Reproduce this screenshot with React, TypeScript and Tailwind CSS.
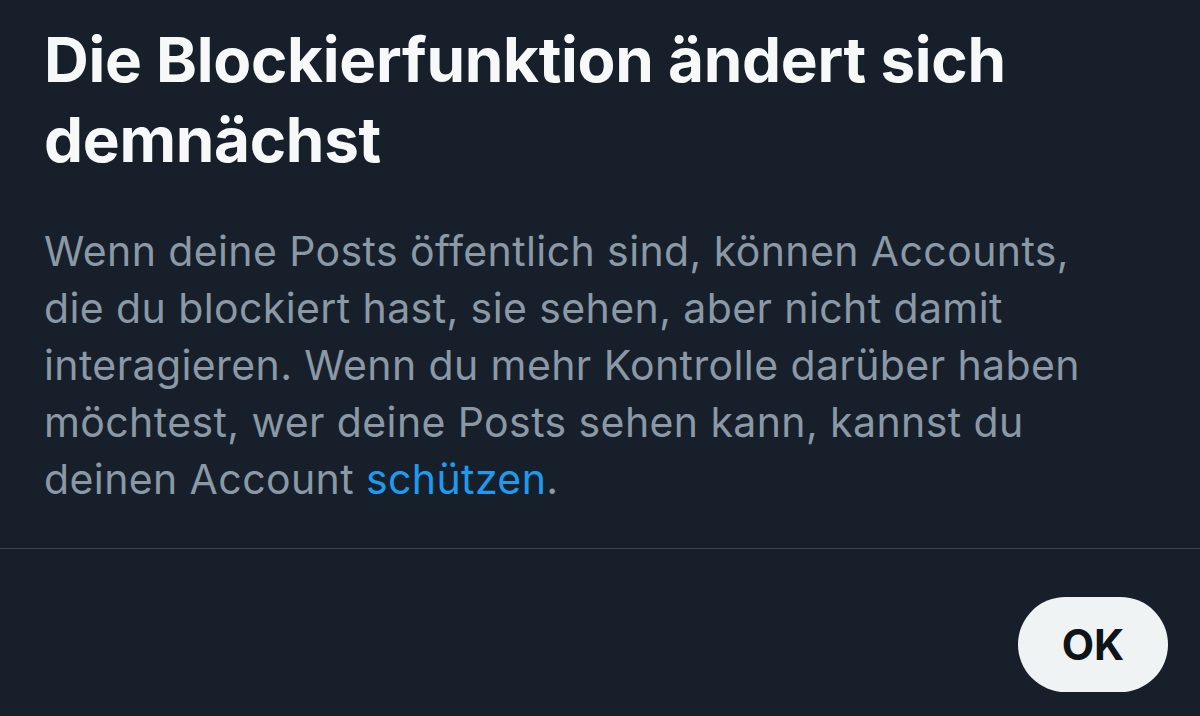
export default function App() {
  return (
    <div className="flex h-[716px] w-[1200px] flex-col bg-[#17202a] font-['Inter',sans-serif]">
      <div className="px-[44px] pt-[20px]">
        <h1 className="text-[62px] font-bold leading-[80px] tracking-[-0.3px] text-[#f7f9f9]">
          Die Blockierfunktion ändert sich
          <br />
          demnächst
        </h1>
        <p className="mt-[43px] text-[41px] leading-[57px] tracking-[0.4px] text-[#8b98a5]">
          Wenn deine Posts öffentlich sind, können Accounts,
          <br />
          die du blockiert hast, sie sehen, aber nicht damit
          <br />
          interagieren. Wenn du mehr Kontrolle darüber haben
          <br />
          möchtest, wer deine Posts sehen kann, kannst du
          <br />
          deinen Account <span className="text-[#1d9bf0]">schützen</span>.
        </p>
      </div>
      <div className="mt-[40px] h-px w-full bg-[#38444d]" />
      <div className="flex justify-end px-[32px] pt-[48px]">
        <button className="flex h-[95px] w-[150px] items-center justify-center rounded-full bg-[#eff3f4] text-[42px] font-bold text-[#0f1419]">
          OK
        </button>
      </div>
    </div>
  );
}
